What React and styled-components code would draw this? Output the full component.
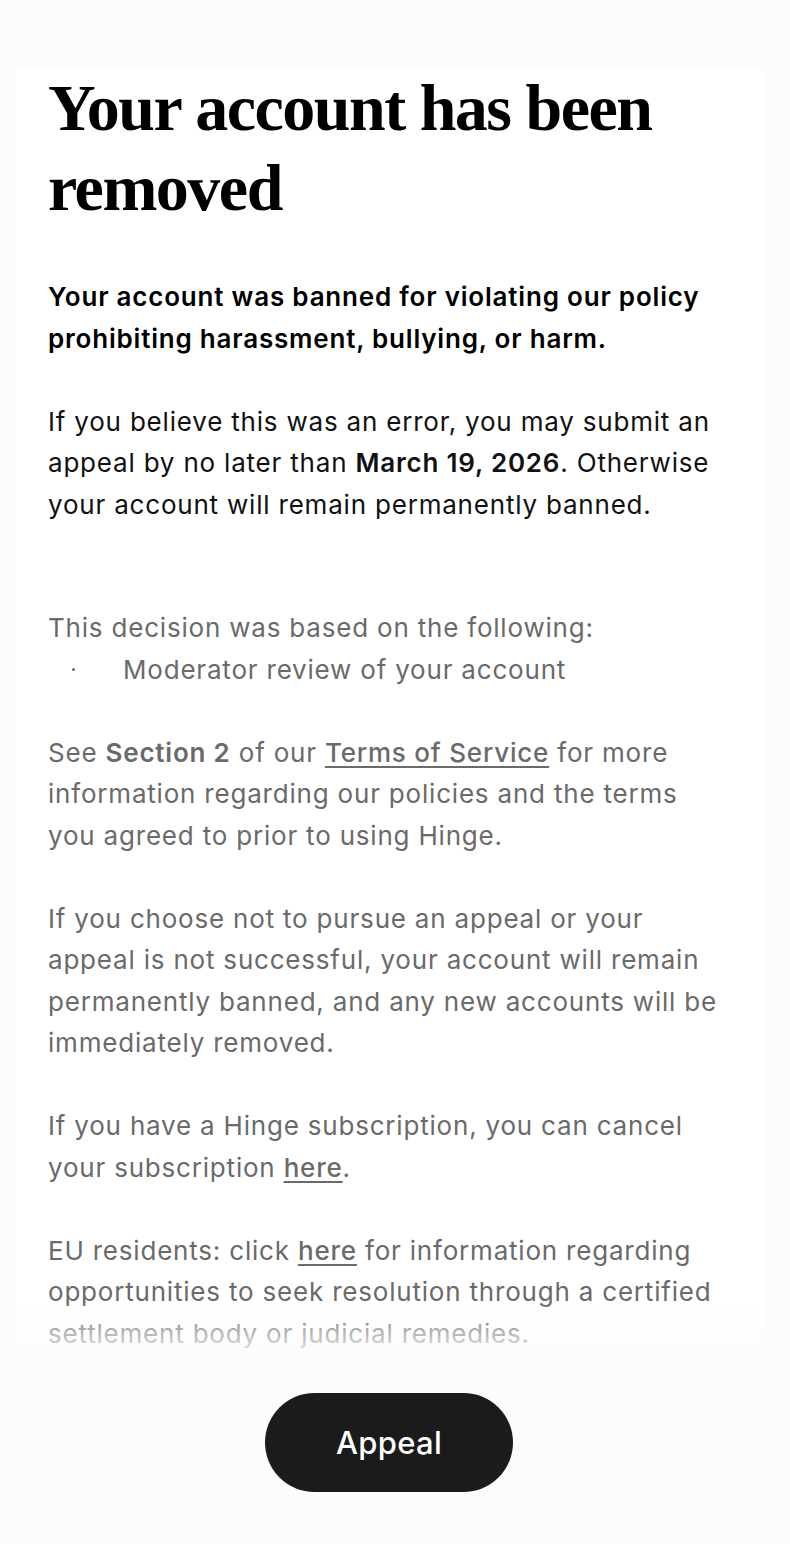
import React from 'react'
import styled, { createGlobalStyle } from 'styled-components'

const GlobalStyle = createGlobalStyle`
  html, body {
    margin: 0;
    padding: 0;
    background: #fcfcfc;
  }
  body {
    font-family: Inter, "Noto Sans", sans-serif;
    -webkit-font-smoothing: antialiased;
  }
`

function App() {
  return (
    <>
      <GlobalStyle />
      <StyledScreen>
        <StyledScroll>
          <StyledCard>
            <StyledTitle>Your account has been removed</StyledTitle>

            <StyledParagraph $tone="strong">
              Your account was banned for violating our policy prohibiting
              harassment, bullying, or harm.
            </StyledParagraph>

            <StyledParagraph $tone="dark">
              If you believe this was an error, you may submit an appeal by no
              later than <b>March 19, 2026</b>. Otherwise your account will
              remain permanently banned.
            </StyledParagraph>

            <StyledSection>
              <StyledParagraph $tone="muted" $tight>
                This decision was based on the following:
              </StyledParagraph>
              <StyledReasons>
                <li>Moderator review of your account</li>
              </StyledReasons>
            </StyledSection>

            <StyledParagraph $tone="muted">
              See <b>Section 2</b> of our <a href="#tos">Terms of Service</a>{' '}
              for more information regarding our policies and the terms you
              agreed to prior to using Hinge.
            </StyledParagraph>

            <StyledParagraph $tone="muted">
              If you choose not to pursue an appeal or your appeal is not
              successful, your account will remain permanently banned, and any
              new accounts will be immediately removed.
            </StyledParagraph>

            <StyledParagraph $tone="muted">
              If you have a Hinge subscription, you can cancel your
              subscription <a href="#subscription">here</a>.
            </StyledParagraph>

            <StyledParagraph $tone="muted">
              EU residents: click <a href="#eu">here</a> for information
              regarding opportunities to seek resolution through a certified
              settlement body or judicial remedies.
            </StyledParagraph>
          </StyledCard>
        </StyledScroll>

        <StyledFooter>
          <StyledAppealButton type="button">Appeal</StyledAppealButton>
        </StyledFooter>
      </StyledScreen>
    </>
  )
}

const StyledScreen = styled.div`
  width: 778px;
  height: 1544px;
  display: flex;
  flex-direction: column;
`

const StyledScroll = styled.div`
  position: relative;
  height: 1350px;
  overflow: hidden;

  &::after {
    content: '';
    position: absolute;
    left: 0;
    right: 0;
    bottom: 0;
    height: 48px;
    background: linear-gradient(
      rgba(252, 252, 252, 0),
      rgba(252, 252, 252, 0.8)
    );
  }
`

const StyledCard = styled.div`
  margin: 68px 15px 0;
  padding: 0 33px 40px;
  background: #fff;
`

const StyledTitle = styled.h1`
  margin: 0 0 48px;
  font-family: "Liberation Serif", "DejaVu Serif", serif;
  font-weight: 700;
  font-size: 66px;
  line-height: 80px;
  letter-spacing: -1.5px;
  color: #000;
`

const toneColors = {
  strong: '#000',
  dark: '#111',
  muted: '#6a6a6a'
}

const StyledParagraph = styled.p`
  margin: 0 0 ${({ $tight }) => ($tight ? '0' : '41.5px')};
  font-size: 26px;
  line-height: 41.5px;
  letter-spacing: 0.8px;
  font-weight: ${({ $tone }) => ($tone === 'strong' ? 600 : 400)};
  color: ${({ $tone }) => toneColors[$tone]};

  b {
    font-weight: 600;
  }

  a {
    color: inherit;
    text-decoration: underline;
    text-decoration-thickness: 2px;
    text-underline-offset: 4px;
    font-weight: 500;
  }
`

const StyledSection = styled.div`
  margin-top: 82px;
  margin-bottom: 41.5px;
`

const StyledReasons = styled.ul`
  margin: 0;
  padding: 0;
  list-style: none;
  color: #6a6a6a;
  font-size: 26px;
  line-height: 41.5px;
  letter-spacing: 0.8px;

  li {
    display: flex;
    align-items: center;
  }

  li::before {
    content: '';
    flex: none;
    width: 3px;
    height: 3px;
    border-radius: 50%;
    background: #6a6a6a;
    margin: 0 48px 0 24px;
  }
`

const StyledFooter = styled.div`
  display: flex;
  justify-content: center;
  padding-top: 43px;
`

const StyledAppealButton = styled.button`
  width: 248px;
  height: 99px;
  border: none;
  border-radius: 50px;
  background: #1b1b1b;
  color: #fff;
  font-family: Inter, "Noto Sans", sans-serif;
  font-size: 31px;
  font-weight: 500;
  letter-spacing: 0.3px;
  cursor: pointer;
`

export default App
